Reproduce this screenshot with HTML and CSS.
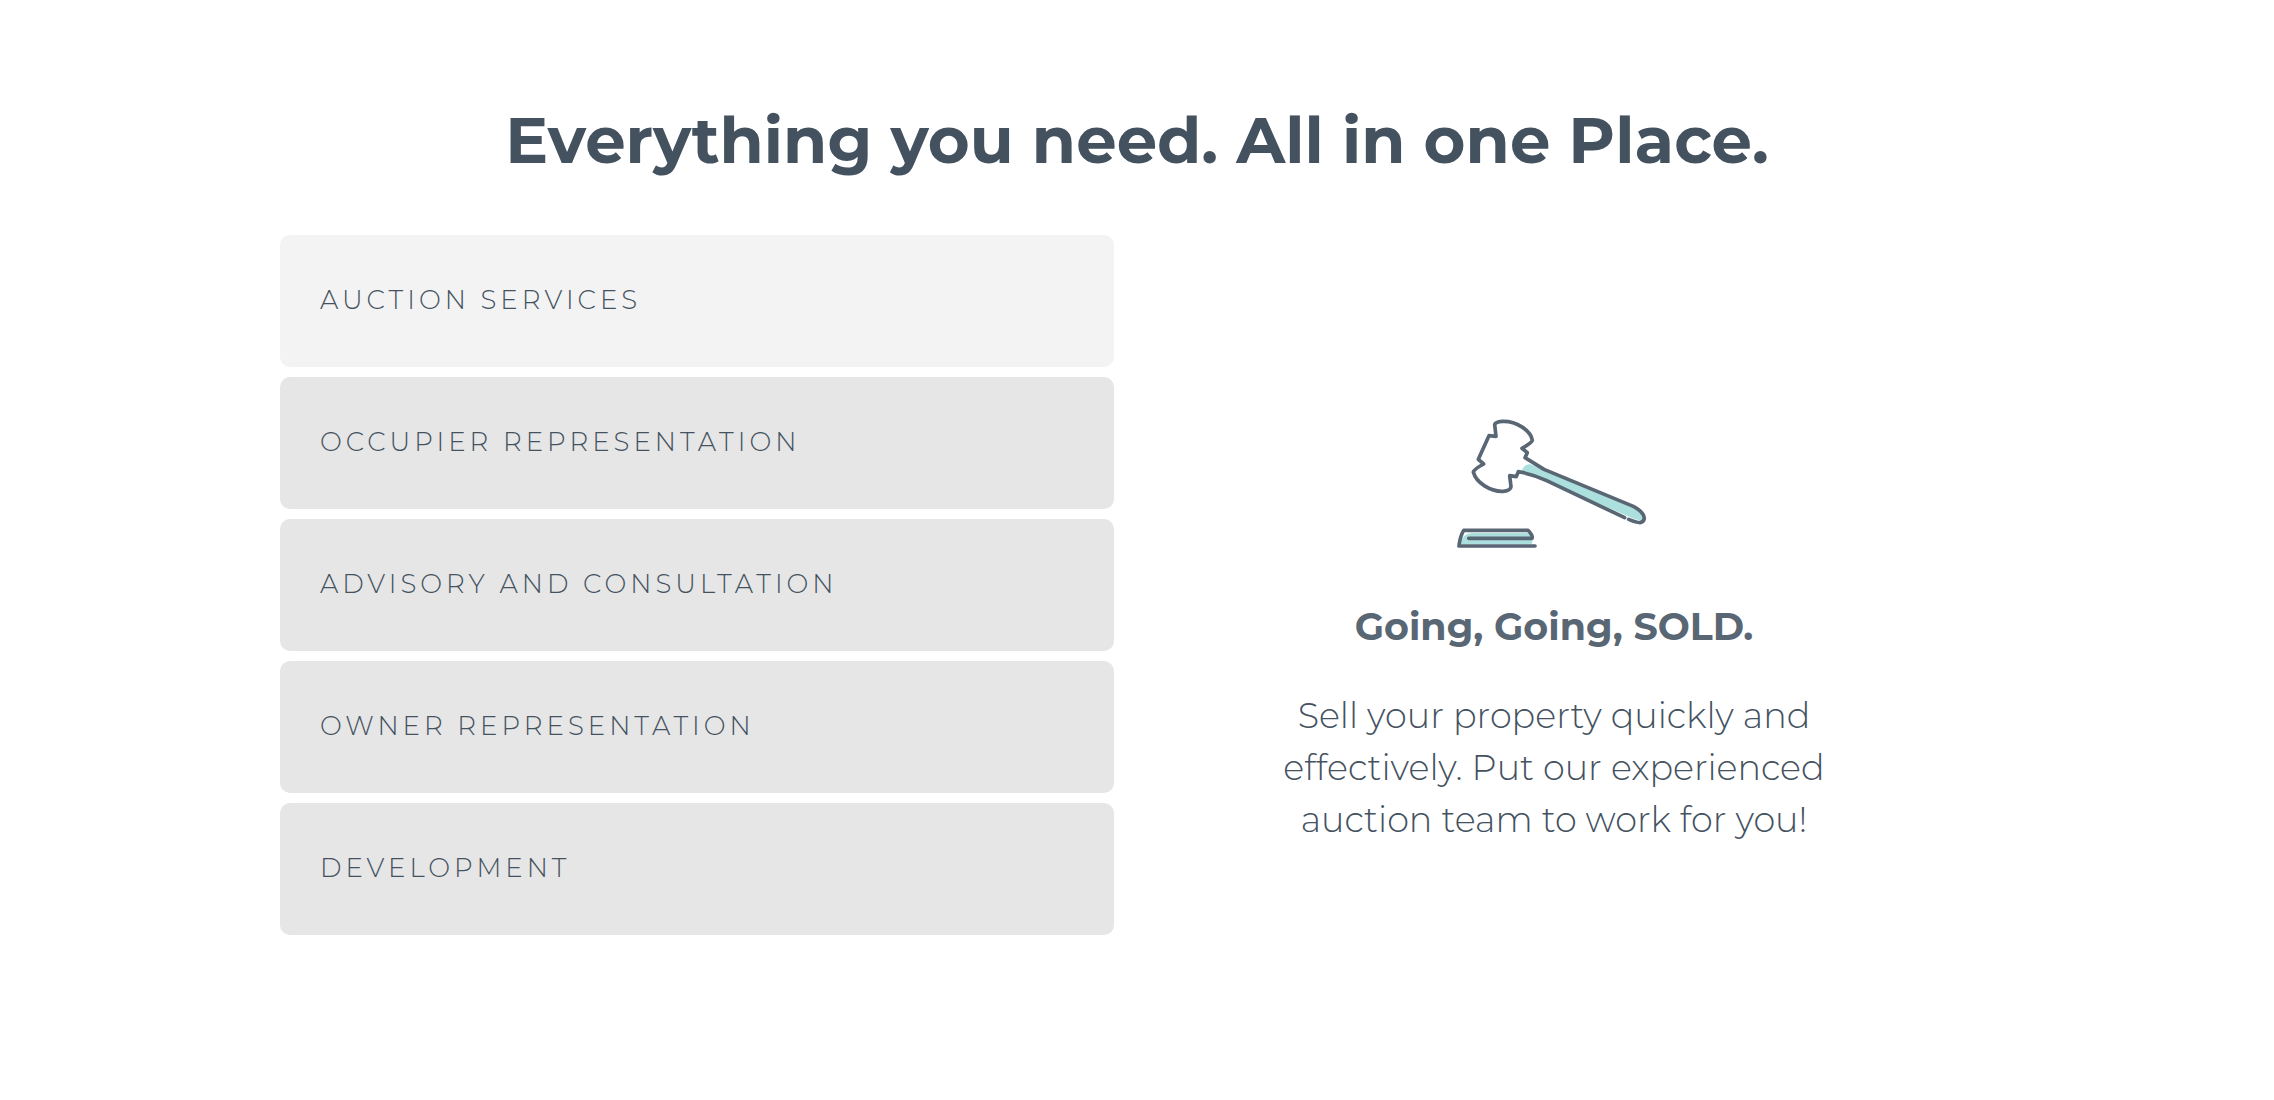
FILE: index.html
```html
<!DOCTYPE html>
<html lang="en">
<head>
<meta charset="utf-8">
<meta name="viewport" content="width=device-width, initial-scale=1">
<title>Services</title>
<link rel="stylesheet" href="styles.css">
</head>
<body>
<main class="services">
  <h1 class="services-title">Everything you need. All in one Place.</h1>
  <div class="services-grid">
    <div class="tabs" role="tablist" aria-orientation="vertical">
      <button class="tab tab-active" type="button" role="tab" aria-selected="true" id="tab-auction" aria-controls="panel-auction">Auction Services</button>
      <button class="tab" type="button" role="tab" aria-selected="false">Occupier Representation</button>
      <button class="tab" type="button" role="tab" aria-selected="false">Advisory and Consultation</button>
      <button class="tab" type="button" role="tab" aria-selected="false">Owner Representation</button>
      <button class="tab" type="button" role="tab" aria-selected="false">Development</button>
    </div>
    <section class="panel" role="tabpanel" id="panel-auction" aria-labelledby="tab-auction">
      <svg class="panel-icon" viewBox="-3 0 690 510" aria-hidden="true">
        <g fill="#abe0de">
          <path d="M245 213C249 199 261 190 275 194L318 213L560 316L603 334Q616 348 606 362L585 358L320 243Q285 226 245 213Z"/>
          <path d="M62 430Q66 402 95 399H270L277 412V427Q277 433 270 433H65Z"/>
        </g>
        <g fill="none" stroke="#596673" stroke-width="11" stroke-linecap="round" stroke-linejoin="round">
          <path d="M554 353L320 242Q278 222 235 215L229 230L209 227L213 260Q212 272 190 274C152 276 108 248 100 216Q103 207 131 192L115 178L147 107L168 109L164 74Q165 66 187 64C228 62 272 91 277 121Q276 127 246 145L262 158L255 173L312 208L580 319Q611 335 613 355Q611 366 600 368Q588 367 566 358"/>
          <path d="M86 415H276Q280 408 264 391H71Q60 409 57 438H285"/>
        </g>
      </svg>
      <h2 class="panel-title">Going, Going, SOLD.</h2>
      <p class="panel-text">Sell your property quickly and effectively. Put our experienced auction team to work for you!</p>
    </section>
  </div>
</main>
</body>
</html>
```
FILE: styles.css
```css
* {
  box-sizing: border-box;
}

body {
  margin: 0;
  background: #fff;
  color: #44525f;
  font-family: Montserrat, Inter, sans-serif;
}

.services {
  max-width: 1794px;
  margin: 0 auto;
  padding: 100px 40px;
}

.services-title {
  margin: 0 0 55px;
  font-size: 64px;
  font-weight: 700;
  line-height: 80px;
  text-align: center;
}

.services-grid {
  display: grid;
  grid-template-columns: minmax(0, 834fr) minmax(0, 880fr);
}

.tabs {
  display: flex;
  flex-direction: column;
  gap: 10px;
}

.tab {
  padding: 49px 40px 51px;
  border: 0;
  border-radius: 10px;
  background: #e6e6e6;
  color: inherit;
  font-family: inherit;
  font-size: 26px;
  font-weight: 300;
  line-height: 32px;
  letter-spacing: 4px;
  text-align: left;
  text-transform: uppercase;
  cursor: pointer;
}

.tab-active {
  background: #f3f3f3;
}

.panel {
  display: flex;
  flex-direction: column;
  align-items: center;
  justify-content: center;
  padding: 76px 40px 0;
  text-align: center;
}

.panel-icon {
  width: 230px;
  height: 170px;
}

.panel-title {
  margin: 33px 0 39px;
  color: #596673;
  font-size: 38px;
  font-weight: 700;
  line-height: 48px;
}

.panel-text {
  max-width: 600px;
  margin: 0;
  font-size: 35px;
  font-weight: 300;
  line-height: 52px;
}
```
